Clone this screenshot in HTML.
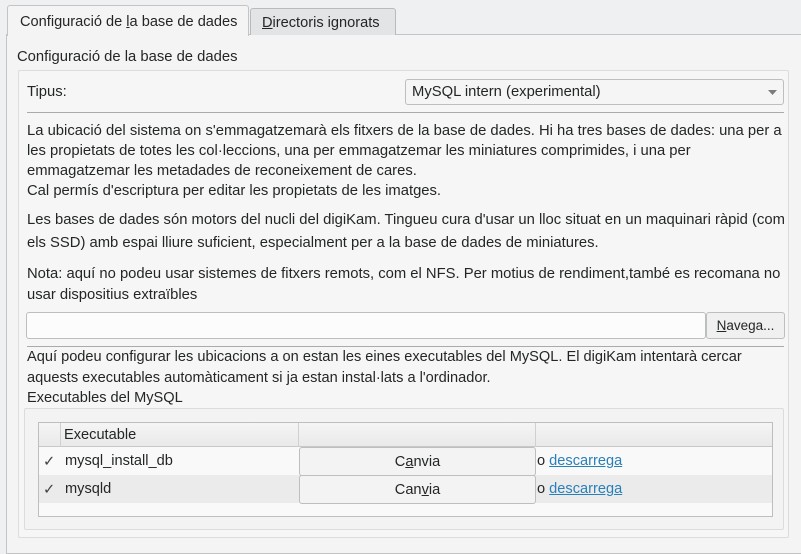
<!DOCTYPE html>
<html><head><meta charset="utf-8"><style>
*{margin:0;padding:0;box-sizing:border-box}
body{width:801px;height:546px;background:#eff0f1;font-family:"Liberation Sans","DejaVu Sans",sans-serif;font-size:14px;color:#232627;position:relative;overflow:hidden}
.a{position:absolute;white-space:nowrap}
.t{line-height:20px;font-size:14.8px;margin-top:1px}
.c{font-size:14.6px}
u{text-decoration:underline}
</style></head><body>
<div class="a" style="left:6px;top:34px;width:800px;height:520px;border:1px solid #c3c4c5;background:#f4f4f4"></div>
<div class="a" style="left:250px;top:8px;width:146px;height:27px;border:1px solid #b9babb;border-bottom:none;background:#e3e4e5;border-radius:3px 3px 0 0;padding:6px 0 0 11px;font-size:14.6px"><u>D</u>irectoris ignorats</div>
<div class="a" style="left:7px;top:5px;width:242px;height:31px;border:1px solid #c3c4c5;border-bottom:none;background:#f4f4f4;border-radius:3px 3px 0 0;padding:8px 0 0 12px;font-size:14.6px">Configuració de <u>l</u>a base de dades</div>
<div class="a t" style="left:17px;top:46px">Configuració de la base de dades</div>
<div class="a" style="left:18px;top:70px;width:771px;height:468px;border:1px solid #dcdcdc;background:#f6f6f6;border-radius:2px"></div>
<div class="a t" style="left:27px;top:81px">Tipus:</div>
<div class="a" style="left:405px;top:79px;width:379px;height:26px;border:1px solid #bcbebf;border-radius:3px;background:#f5f5f5;padding:4px 0 0 6px;font-size:14.8px">MySQL intern (experimental)
<svg style="position:absolute;right:6px;top:10px" width="9" height="5"><path d="M0 0H9L4.5 5Z" fill="#7a7c7e"/></svg></div>
<div class="a" style="left:27px;top:112px;width:757px;height:1px;background:#a8aaab"></div>
<div class="a t" style="left:27px;top:120px">La ubicació del sistema on s'emmagatzemarà els fitxers de la base de dades. Hi ha tres bases de dades: una per a</div>
<div class="a t" style="left:27px;top:140px">les propietats de totes les col·leccions, una per emmagatzemar les miniatures comprimides, i una per</div>
<div class="a t" style="left:27px;top:160px">emmagatzemar les metadades de reconeixement de cares.</div>
<div class="a t" style="left:27px;top:180px">Cal permís d'escriptura per editar les propietats de les imatges.</div>
<div class="a t" style="left:27px;top:209px">Les bases de dades són motors del nucli del digiKam. Tingueu cura d'usar un lloc situat en un maquinari ràpid (com</div>
<div class="a t" style="left:27px;top:232px">els SSD) amb espai lliure suficient, especialment per a la base de dades de miniatures.</div>
<div class="a t" style="left:27px;top:263px">Nota: aquí no podeu usar sistemes de fitxers remots, com el NFS. Per motius de rendiment,també es recomana no</div>
<div class="a t" style="left:27px;top:284px">usar dispositius extraïbles</div>
<div class="a" style="left:26px;top:312px;width:680px;height:27px;border:1px solid #bcbebf;border-radius:3px;background:#fcfcfc"></div>
<div class="a c" style="left:706px;top:312px;width:79px;height:27px;border:1px solid #bcbebf;border-radius:3px;background:#f0f0f0;text-align:center;padding-top:5px;font-size:13.5px"><u>N</u>avega...</div>
<div class="a" style="left:27px;top:346px;width:757px;height:1px;background:#a8aaab"></div>
<div class="a t c" style="left:27px;top:346px">Aquí podeu configurar les ubicacions a on estan les eines executables del MySQL. El digiKam intentarà cercar</div>
<div class="a t c" style="left:27px;top:367px">aquests executables automàticament si ja estan instal·lats a l'ordinador.</div>
<div class="a t c" style="left:27px;top:387px">Executables del MySQL</div>
<div class="a" style="left:24px;top:408px;width:760px;height:122px;border:1px solid #dcdcdc;border-radius:2px;background:#f3f3f3"></div>
<div class="a" style="left:38px;top:422px;width:735px;height:95px;border:1px solid #bcbebf;background:#f9f9f9"></div>
<div class="a" style="left:39px;top:423px;width:733px;height:24px;background:linear-gradient(#f5f5f5,#e9e9e9);border-bottom:1px solid #c8c8c8"></div>
<div class="a" style="left:60px;top:423px;width:1px;height:24px;background:#d0d0d0"></div>
<div class="a" style="left:298px;top:423px;width:1px;height:24px;background:#d0d0d0"></div>
<div class="a" style="left:535px;top:423px;width:1px;height:24px;background:#d0d0d0"></div>
<div class="a c" style="left:64px;top:427px">Executable</div>
<div class="a" style="left:39px;top:475px;width:733px;height:28px;background:#ebebeb"></div>
<div class="a c" style="left:43px;top:453px;color:#444">✓</div>
<div class="a c" style="left:65px;top:453px">mysql_install_db</div>
<div class="a c" style="left:43px;top:481px;color:#444">✓</div>
<div class="a c" style="left:65px;top:481px">mysqld</div>
<div class="a c" style="left:299px;top:447px;width:237px;height:29px;border:1px solid #bcbebf;border-radius:3px;background:#f3f3f3;text-align:center;padding-top:6px">C<u>a</u>nvia</div>
<div class="a c" style="left:299px;top:475px;width:237px;height:29px;border:1px solid #bcbebf;border-radius:3px;background:#f3f3f3;text-align:center;padding-top:6px">Can<u>v</u>ia</div>
<div class="a c" style="left:537px;top:453px">o <u style="color:#2980b9">descarrega</u></div>
<div class="a c" style="left:537px;top:481px">o <u style="color:#2980b9">descarrega</u></div>
</body></html>
